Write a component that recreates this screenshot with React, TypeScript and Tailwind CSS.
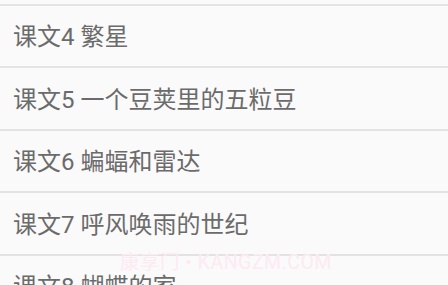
import React from "react"

const lessons = [
  "课文4 繁星",
  "课文5 一个豆荚里的五粒豆",
  "课文6 蝙蝠和雷达",
  "课文7 呼风唤雨的世纪",
  "课文8 蝴蝶的家",
]

export default function App() {
  return (
    <div className="relative h-[285px] w-[448px] overflow-hidden bg-[#fafafa] font-['Roboto','Noto_Sans_CJK_SC',sans-serif]">
      <div className="h-[3.5px]" />
      <ul>
        {lessons.map((title) => (
          <li
            key={title}
            className="flex h-[62.5px] items-center border-t-2 border-[#e3e3e3] pl-[13px] pt-[3px] text-[24px] leading-none text-[#6b6b6b]"
          >
            {title}
          </li>
        ))}
      </ul>
      <div className="pointer-events-none absolute left-[120px] top-[253px] text-[19.5px] leading-none tracking-[0.5px] whitespace-nowrap text-[#fdeaf3]">
        康享门 • KANGZM.COM
      </div>
    </div>
  )
}
